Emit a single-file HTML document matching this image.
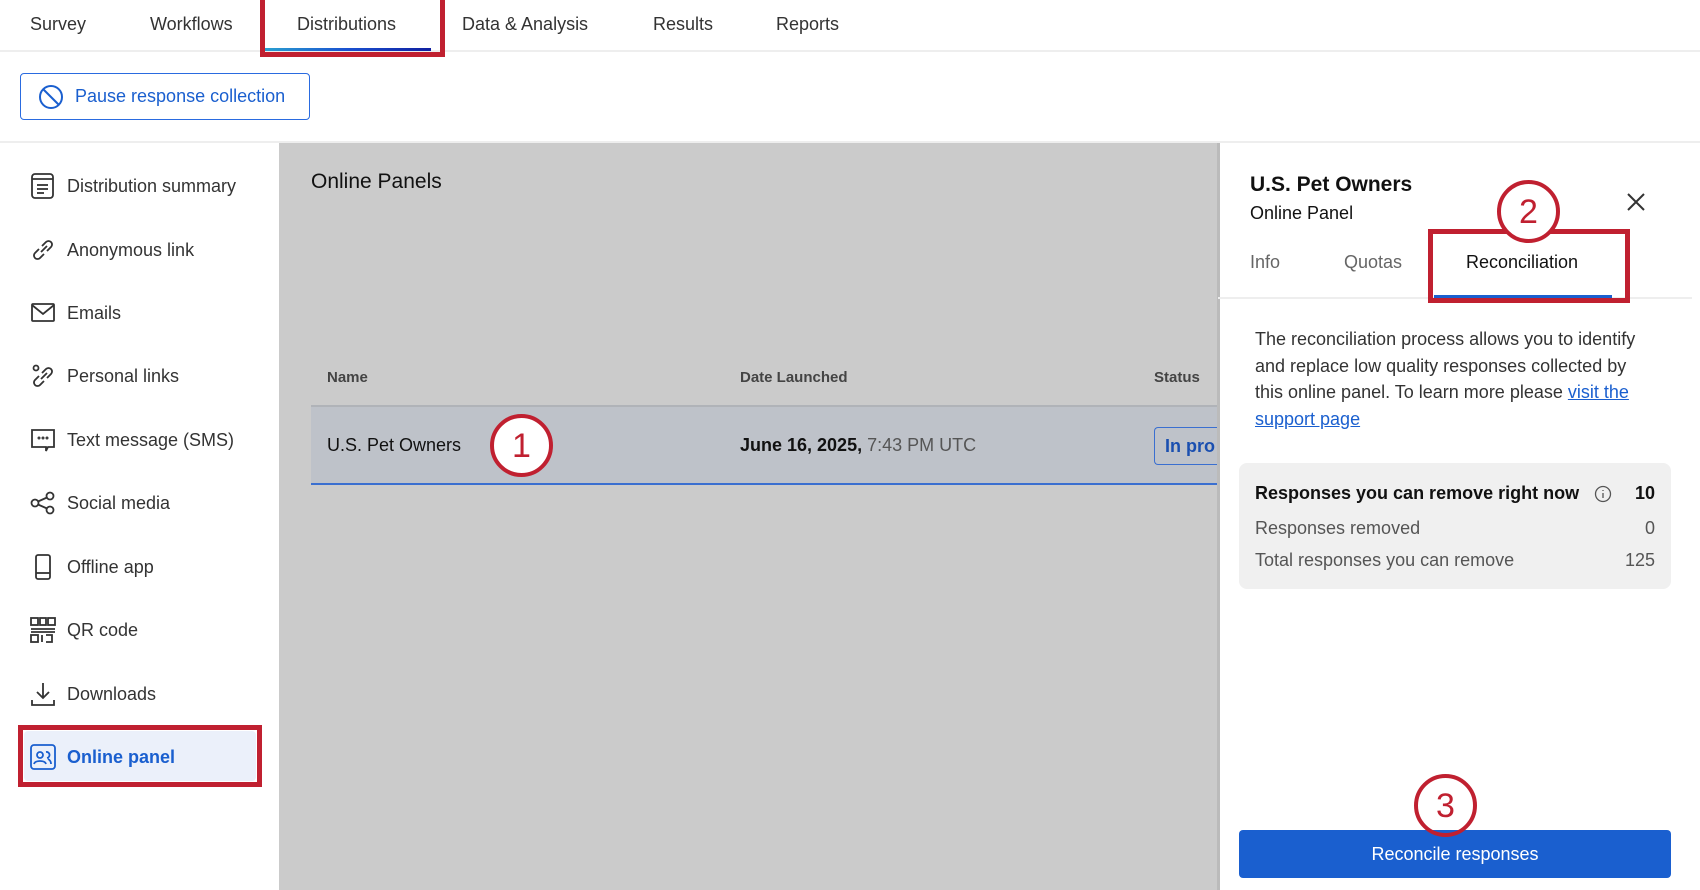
<!DOCTYPE html>
<html><head><meta charset="utf-8"><style>
*{box-sizing:border-box;margin:0;padding:0}
body{width:1700px;height:890px;overflow:hidden;background:#fff;font-family:"Liberation Sans",sans-serif;color:#222;position:relative}
.a{position:absolute;white-space:nowrap}
.nav{font-size:18px;color:#333;top:14px}
.side{font-size:18px;color:#333;left:67px}
.ic{position:absolute;left:29px;width:28px;height:28px}
.circ{position:absolute;border:4px solid #c02030;border-radius:50%;background:#fff;color:#c02030;font-size:34px;text-align:center}
.red{position:absolute;border:5px solid #c02030}
</style></head><body>
<!-- top nav -->
<div class="a nav" style="left:30px">Survey</div>
<div class="a nav" style="left:150px">Workflows</div>
<div class="a nav" style="left:297px">Distributions</div>
<div class="a nav" style="left:462px">Data &amp; Analysis</div>
<div class="a nav" style="left:653px">Results</div>
<div class="a nav" style="left:776px">Reports</div>
<div class="a" style="left:0;top:50px;width:1700px;height:2px;background:#eee"></div>
<div class="a" style="left:265px;top:48px;width:166px;height:3px;background:linear-gradient(90deg,#2aa0d0,#1a50d0,#1020a0)"></div>
<div class="red" style="left:260px;top:0;width:185px;height:57px;border-top:none"></div>
<!-- pause button -->
<div class="a" style="left:20px;top:73px;width:290px;height:47px;border:1.5px solid #2a6be0;border-radius:4px"></div>
<svg class="a" style="left:38px;top:84px" width="26" height="26" viewBox="0 0 26 26"><circle cx="13" cy="13" r="11" fill="none" stroke="#1a5fcf" stroke-width="2"/><line x1="5.5" y1="5.5" x2="20.5" y2="20.5" stroke="#1a5fcf" stroke-width="2"/></svg>
<div class="a" style="left:75px;top:86px;font-size:18px;color:#1a5fcf">Pause response collection</div>
<div class="a" style="left:0;top:141px;width:1700px;height:2px;background:#eee"></div>
<!-- sidebar -->
<svg class="ic" style="top:172px" viewBox="0 0 28 28" fill="none" stroke="#333" stroke-width="1.8"><rect x="3" y="2" width="21" height="24" rx="3"/><line x1="3" y1="7" x2="24" y2="7"/><line x1="8" y1="13" x2="19" y2="13"/><line x1="8" y1="17" x2="19" y2="17"/><line x1="8" y1="21" x2="15" y2="21"/></svg>
<div class="a side" style="top:176px">Distribution summary</div>
<svg class="ic" style="top:236px" viewBox="0 0 28 28" fill="none" stroke="#333" stroke-width="1.8"><path d="M12 16l6-6M10 13l-4 4a3.5 3.5 0 005 5l4-4M18 15l4-4a3.5 3.5 0 00-5-5l-4 4"/></svg>
<div class="a side" style="top:240px">Anonymous link</div>
<svg class="ic" style="top:299px" viewBox="0 0 28 28" fill="none" stroke="#333" stroke-width="1.8"><rect x="3" y="5" width="22" height="17" rx="1"/><path d="M3 6l11 9 11-9"/></svg>
<div class="a side" style="top:303px">Emails</div>
<svg class="ic" style="top:362px" viewBox="0 0 28 28" fill="none" stroke="#333" stroke-width="1.8"><circle cx="7" cy="6" r="2.5"/><path d="M12 17l6-6M10 14l-4 4a3.5 3.5 0 005 5l4-4M18 16l4-4a3.5 3.5 0 00-5-5l-4 4"/></svg>
<div class="a side" style="top:366px">Personal links</div>
<svg class="ic" style="top:426px" viewBox="0 0 28 28" fill="none" stroke="#333" stroke-width="1.8"><path d="M3 4h22v17h-6l-2 4v-4H3z"/><circle cx="10" cy="12" r=".6"/><circle cx="14" cy="12" r=".6"/><circle cx="18" cy="12" r=".6"/></svg>
<div class="a side" style="top:430px">Text message (SMS)</div>
<svg class="ic" style="top:489px" viewBox="0 0 28 28" fill="none" stroke="#333" stroke-width="1.8"><circle cx="6" cy="14" r="3.5"/><circle cx="21" cy="7" r="3.5"/><circle cx="21" cy="21" r="3.5"/><path d="M9 12.5l9-4M9 15.5l9 4"/></svg>
<div class="a side" style="top:493px">Social media</div>
<svg class="ic" style="top:553px" viewBox="0 0 28 28" fill="none" stroke="#333" stroke-width="1.8"><rect x="7" y="2" width="14" height="24" rx="2"/><line x1="7" y1="20" x2="21" y2="20"/></svg>
<div class="a side" style="top:557px">Offline app</div>
<svg class="ic" style="top:616px" viewBox="0 0 28 28" fill="none" stroke="#333" stroke-width="1.8"><rect x="2" y="2" width="7" height="7"/><rect x="19" y="2" width="7" height="7"/><rect x="2" y="19" width="7" height="7"/><rect x="11" y="2" width="6" height="7"/><path d="M2 13h24M2 16h24M13 19v7M17 19h6v7h-6"/></svg>
<div class="a side" style="top:620px">QR code</div>
<svg class="ic" style="top:680px" viewBox="0 0 28 28" fill="none" stroke="#333" stroke-width="1.8"><path d="M14 3v15M8 12l6 6 6-6M3 20v5h22v-5"/></svg>
<div class="a side" style="top:684px">Downloads</div>
<div class="a" style="left:24px;top:731px;width:232px;height:50px;background:#ebf0fa;border-radius:4px"></div>
<svg class="ic" style="top:743px" viewBox="0 0 28 28" fill="none" stroke="#1a5fcf" stroke-width="1.8"><rect x="2" y="2" width="24" height="24" rx="3"/><circle cx="11" cy="12" r="3"/><path d="M5 21c1-4 11-4 12 0M17 9a3 3 0 011 6M19 16c2 1 3 3 3 5"/></svg>
<div class="a side" style="top:747px;color:#1a5fcf;font-weight:bold">Online panel</div>
<div class="red" style="left:18px;top:725px;width:244px;height:62px"></div>
<!-- main gray -->
<div class="a" style="left:279px;top:143px;width:939px;height:747px;background:#cbcbcb"></div>
<div class="a" style="left:311px;top:170px;font-size:21px;color:#111">Online Panels</div>
<div class="a" style="left:327px;top:369px;font-size:15px;font-weight:bold;color:#444">Name</div>
<div class="a" style="left:740px;top:369px;font-size:15px;font-weight:bold;color:#444">Date Launched</div>
<div class="a" style="left:1154px;top:369px;font-size:15px;font-weight:bold;color:#444">Status</div>
<div class="a" style="left:311px;top:405px;width:907px;height:80px;background:#bec2c9;border-top:2px solid #b0b3b8;border-bottom:2px solid #3a6fd0"></div>
<div class="a" style="left:327px;top:435px;font-size:18px;color:#111">U.S. Pet Owners</div>
<div class="a" style="left:740px;top:435px;font-size:18px;color:#111"><b>June 16, 2025,</b> <span style="color:#555">7:43 PM UTC</span></div>
<div class="a" style="left:1154px;top:427px;width:64px;height:38px;border:1.5px solid #3a6fd0;border-right:none;border-radius:4px 0 0 4px;overflow:hidden"><span style="position:absolute;left:10px;top:8px;font-size:18px;font-weight:bold;color:#1a4fb0">In pro</span></div>
<div class="circ" style="left:490px;top:414px;width:63px;height:63px;line-height:56px">1</div>
<!-- right panel -->
<div class="a" style="left:1217px;top:143px;width:3px;height:747px;background:#bbb"></div>
<div class="a" style="left:1250px;top:173px;font-size:21px;font-weight:bold;color:#111">U.S. Pet Owners</div>
<div class="a" style="left:1250px;top:203px;font-size:18px;color:#111">Online Panel</div>
<svg class="a" style="left:1626px;top:192px" width="20" height="20" viewBox="0 0 20 20" stroke="#333" stroke-width="2"><path d="M2 2l16 16M18 2L2 18"/></svg>
<div class="a" style="left:1250px;top:252px;font-size:18px;color:#666">Info</div>
<div class="a" style="left:1344px;top:252px;font-size:18px;color:#666">Quotas</div>
<div class="a" style="left:1466px;top:252px;font-size:18px;color:#111">Reconciliation</div>
<div class="a" style="left:1218px;top:297px;width:474px;height:2px;background:#eee"></div>
<div class="a" style="left:1434px;top:295px;width:178px;height:3px;background:#1a5fcf"></div>
<div class="red" style="left:1428px;top:229px;width:202px;height:74px"></div>
<div class="circ" style="left:1497px;top:180px;width:63px;height:63px;line-height:56px">2</div>
<div class="a" style="left:1255px;top:326px;font-size:18px;line-height:26.5px;color:#333;white-space:normal;width:400px">The reconciliation process allows you to identify and replace low quality responses collected by this online panel. To learn more please <span style="color:#1a5fcf;text-decoration:underline">visit the support page</span></div>
<div class="a" style="left:1239px;top:463px;width:432px;height:126px;background:#f0f0f0;border-radius:8px"></div>
<div class="a" style="left:1255px;top:483px;font-size:18px;font-weight:bold;color:#111">Responses you can remove right now</div>
<svg class="a" style="left:1594px;top:485px" width="18" height="18" viewBox="0 0 18 18" fill="none" stroke="#555" stroke-width="1.3"><circle cx="9" cy="9" r="7.5"/><path d="M9 8v5M9 5v1"/></svg>
<div class="a" style="left:1620px;top:483px;width:35px;text-align:right;font-size:18px;font-weight:bold;color:#111">10</div>
<div class="a" style="left:1255px;top:518px;font-size:18px;color:#555">Responses removed</div>
<div class="a" style="left:1600px;top:518px;width:55px;text-align:right;font-size:18px;color:#555">0</div>
<div class="a" style="left:1255px;top:550px;font-size:18px;color:#555">Total responses you can remove</div>
<div class="a" style="left:1600px;top:550px;width:55px;text-align:right;font-size:18px;color:#555">125</div>
<div class="a" style="left:1239px;top:830px;width:432px;height:48px;background:#1a5fcf;border-radius:4px;color:#fff;font-size:18px;text-align:center;line-height:48px">Reconcile responses</div>
<div class="circ" style="left:1414px;top:774px;width:63px;height:63px;line-height:56px;background:transparent">3</div>
</body></html>
